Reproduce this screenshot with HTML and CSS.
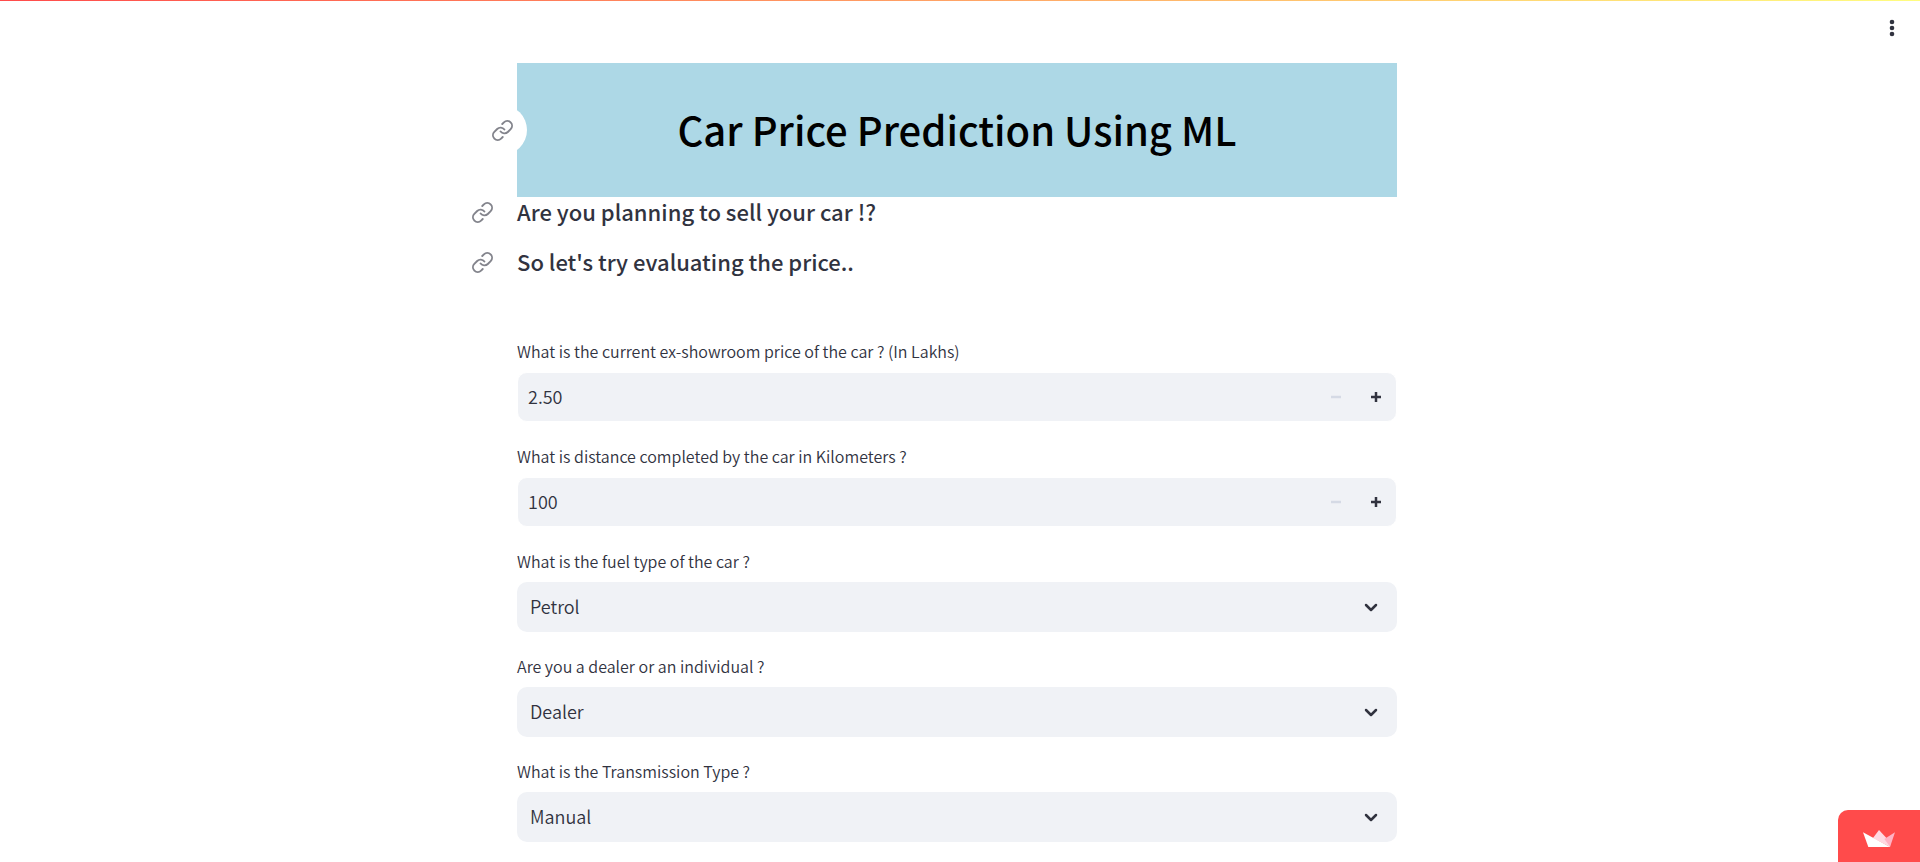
FILE: index.html
```html
<!DOCTYPE html>
<html lang="en">
<head>
<meta charset="utf-8">
<meta name="viewport" content="width=device-width, initial-scale=1">
<title>Car Price Prediction</title>
<link rel="stylesheet" href="styles.css">
</head>
<body>
<svg class="sprite" aria-hidden="true">
  <symbol id="chain" viewBox="0 0 24 24"><path d="M10 13a5 5 0 0 0 7.54.54l3-3a5 5 0 0 0-7.07-7.07l-1.72 1.71"/><path d="M14 11a5 5 0 0 0-7.54-.54l-3 3a5 5 0 0 0 7.07 7.07l1.71-1.71"/></symbol>
  <symbol id="minus" viewBox="0 0 8 8"><path d="M0 3h8v2H0z"/></symbol>
  <symbol id="plus" viewBox="0 0 8 8"><path d="M3 0h2v3h3v2H5v3H3V5H0V3h3z"/></symbol>
  <symbol id="chevron" viewBox="0 0 14 10"><path d="M2 2l5 5 5-5"/></symbol>
</svg>
<header class="topbar">
  <button class="menu" type="button" aria-label="Main menu">
    <svg class="dots" viewBox="0 0 6 18"><circle cx="3" cy="3" r="2.3"/><circle cx="3" cy="9" r="2.3"/><circle cx="3" cy="15" r="2.3"/></svg>
  </button>
</header>
<main class="page">
  <div class="banner">
    <a class="anchor anchor-round" href="#title" aria-label="Link to title"><svg class="chain"><use href="#chain"/></svg></a>
    <h1 class="title" id="title">Car Price Prediction Using ML</h1>
  </div>
  <div class="heading">
    <a class="anchor" href="#planning" aria-label="Link to heading"><svg class="chain"><use href="#chain"/></svg></a>
    <h2 class="subtitle" id="planning">Are you planning to sell your car !?</h2>
  </div>
  <div class="heading">
    <a class="anchor" href="#evaluate" aria-label="Link to heading"><svg class="chain"><use href="#chain"/></svg></a>
    <h2 class="subtitle" id="evaluate">So let's try evaluating the price..</h2>
  </div>
  <form class="form">
    <div class="field">
      <label class="label" for="price">What is the current ex-showroom price of the car ? (In Lakhs)</label>
      <div class="number">
        <input class="input" id="price" type="text" inputmode="decimal" value="2.50">
        <button class="step" type="button" aria-label="Decrease" disabled><svg class="sign"><use href="#minus"/></svg></button>
        <button class="step" type="button" aria-label="Increase"><svg class="sign"><use href="#plus"/></svg></button>
      </div>
    </div>
    <div class="field">
      <label class="label" for="distance">What is distance completed by the car in Kilometers ?</label>
      <div class="number">
        <input class="input" id="distance" type="text" inputmode="numeric" value="100">
        <button class="step" type="button" aria-label="Decrease" disabled><svg class="sign"><use href="#minus"/></svg></button>
        <button class="step" type="button" aria-label="Increase"><svg class="sign"><use href="#plus"/></svg></button>
      </div>
    </div>
    <div class="field">
      <label class="label" for="fuel">What is the fuel type of the car ?</label>
      <div class="choice">
        <select class="select" id="fuel"><option>Petrol</option></select>
        <svg class="chevron"><use href="#chevron"/></svg>
      </div>
    </div>
    <div class="field">
      <label class="label" for="seller">Are you a dealer or an individual ?</label>
      <div class="choice">
        <select class="select" id="seller"><option>Dealer</option></select>
        <svg class="chevron"><use href="#chevron"/></svg>
      </div>
    </div>
    <div class="field">
      <label class="label" for="transmission">What is the Transmission Type ?</label>
      <div class="choice">
        <select class="select" id="transmission"><option>Manual</option></select>
        <svg class="chevron"><use href="#chevron"/></svg>
      </div>
    </div>
  </form>
</main>
<a class="badge" href="#title" aria-label="Hosted app">
  <svg class="crown" viewBox="0 0 96 51"><path fill="#ffd9e2" d="M48 0L30 24l51 27 1-14z"/><path fill="#ffb3c4" d="M96 7L64 27l16 22 1 2z"/><path fill="#fff" d="M0 7l16 44h65z"/></svg>
</a>
</body>
</html>
```

FILE: styles.css
```css
* {
  box-sizing: border-box;
}

body {
  margin: 0;
  padding-right: 6px;
  background: #fff;
  color: #31333f;
  font-family: "Noto Sans CJK SC", "Open Sans", sans-serif;
  font-size: 18px;
  font-weight: 350;
}

.sprite {
  position: absolute;
  width: 0;
  height: 0;
}

.topbar {
  position: fixed;
  inset: 0 0 auto;
  display: flex;
  justify-content: flex-end;
  padding: 12px 19px 0 0;
}

.topbar::before {
  content: "";
  position: absolute;
  inset: 0 0 auto;
  height: 1px;
  background: linear-gradient(90deg, #ff4b4b, #fffd80);
}

.menu {
  display: flex;
  padding: 7px 6px;
  border: 0;
  background: none;
}

.dots {
  width: 6px;
  height: 18px;
  fill: #31333f;
}

.page {
  max-width: 880px;
  margin: 0 auto;
  padding: 63px 0 20px;
}

.banner {
  position: relative;
  padding: 36px 20px 38px;
  background: #add8e6;
}

.title {
  margin: 0;
  color: #000;
  font-size: 40px;
  font-weight: 500;
  line-height: 60px;
  text-align: center;
}

.heading {
  position: relative;
  padding-bottom: 22px;
}

.subtitle {
  margin: 0;
  font-size: 22px;
  font-weight: 500;
  line-height: 28px;
}

.anchor {
  position: absolute;
  top: 0;
  left: -46px;
  display: flex;
  align-items: center;
  height: 30px;
}

.anchor-round {
  top: 42px;
  left: -40px;
  justify-content: center;
  width: 50px;
  height: 50px;
  border-radius: 50%;
  background: #fff;
}

.chain {
  width: 23px;
  height: 23px;
  fill: none;
  stroke: #83848c;
  stroke-width: 2;
  stroke-linecap: round;
  stroke-linejoin: round;
}

.form {
  display: flex;
  flex-direction: column;
  gap: 23px;
  padding-top: 43px;
}

.field {
  display: flex;
  flex-direction: column;
  gap: 10px;
}

.label {
  font-size: 16px;
  line-height: 22px;
}

.number {
  display: flex;
  height: 50px;
  border: 1px solid #fff;
  border-radius: 10px;
  overflow: hidden;
  background: #f0f2f6;
}

.input {
  flex: 1;
  min-width: 0;
  padding: 0 10px 2px;
  border: 0;
  background: none;
  color: inherit;
  font: inherit;
}

.step {
  display: flex;
  align-items: center;
  justify-content: center;
  width: 40px;
  padding: 0;
  border: 0;
  background: none;
  color: #31333f;
}

.step:disabled {
  color: #d5dae5;
}

.sign {
  width: 10px;
  height: 10px;
  fill: currentColor;
}

.choice {
  display: grid;
  align-items: center;
}

.select,
.chevron {
  grid-area: 1 / 1;
}

.select {
  appearance: none;
  width: 100%;
  height: 50px;
  padding: 0 50px 2px 13px;
  border: 0;
  border-radius: 10px;
  background: #f0f2f6;
  color: inherit;
  font: inherit;
}

.chevron {
  justify-self: end;
  width: 14px;
  height: 10px;
  margin: 1px 19px 0 0;
  fill: none;
  stroke: #31333f;
  stroke-width: 2.5;
  stroke-linecap: round;
  stroke-linejoin: round;
  pointer-events: none;
}

.badge {
  position: fixed;
  right: 0;
  bottom: 0;
  display: flex;
  padding: 20px 25px 15px;
  border-top-left-radius: 10px;
  background: #ff4b4b;
}

.crown {
  width: 32px;
  height: 17px;
}
```
